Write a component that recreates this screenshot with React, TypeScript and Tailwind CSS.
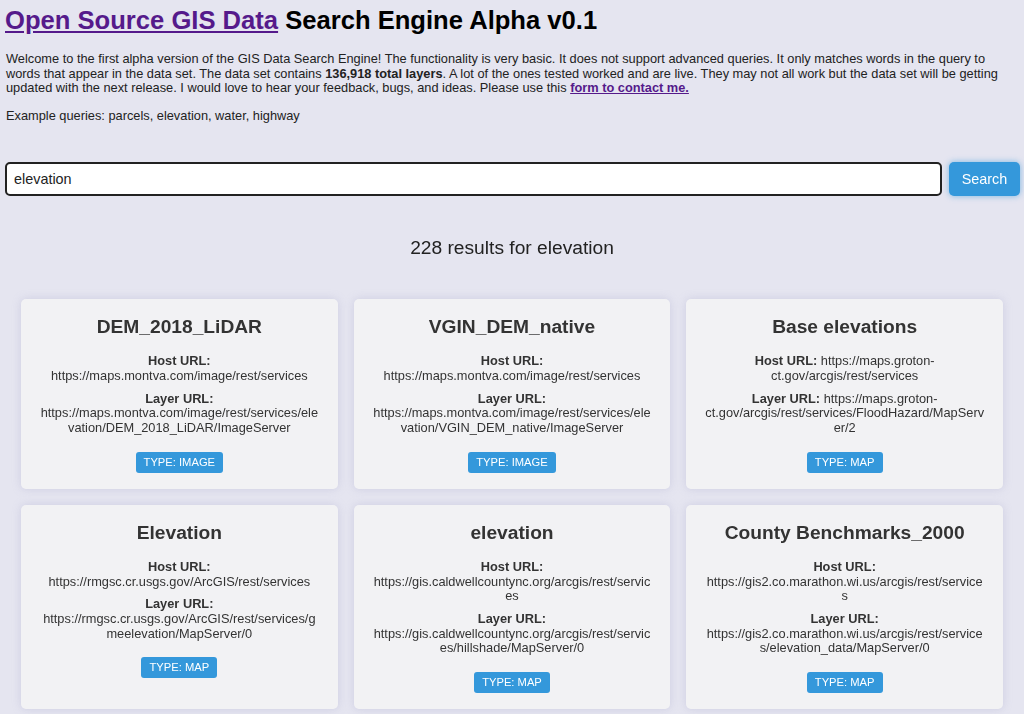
import { useState } from "react";

interface Layer {
    name: string;
    hostUrl: string;
    layerUrl: string;
    type: string;
}

const results: Layer[] = [
    {
        name: "DEM_2018_LiDAR",
        hostUrl: "https://maps.montva.com/image/rest/services",
        layerUrl: "https://maps.montva.com/image/rest/services/elevation/DEM_2018_LiDAR/ImageServer",
        type: "Image",
    },
    {
        name: "VGIN_DEM_native",
        hostUrl: "https://maps.montva.com/image/rest/services",
        layerUrl: "https://maps.montva.com/image/rest/services/elevation/VGIN_DEM_native/ImageServer",
        type: "Image",
    },
    {
        name: "Base elevations",
        hostUrl: "https://maps.groton-ct.gov/arcgis/rest/services",
        layerUrl: "https://maps.groton-ct.gov/arcgis/rest/services/FloodHazard/MapServer/2",
        type: "Map",
    },
    {
        name: "Elevation",
        hostUrl: "https://rmgsc.cr.usgs.gov/ArcGIS/rest/services",
        layerUrl: "https://rmgsc.cr.usgs.gov/ArcGIS/rest/services/gmeelevation/MapServer/0",
        type: "Map",
    },
    {
        name: "elevation",
        hostUrl: "https://gis.caldwellcountync.org/arcgis/rest/services",
        layerUrl: "https://gis.caldwellcountync.org/arcgis/rest/services/hillshade/MapServer/0",
        type: "Map",
    },
    {
        name: "County Benchmarks_2000",
        hostUrl: "https://gis2.co.marathon.wi.us/arcgis/rest/services",
        layerUrl: "https://gis2.co.marathon.wi.us/arcgis/rest/services/elevation_data/MapServer/0",
        type: "Map",
    },
];

function ResultCard({ layer }: { layer: Layer }) {
    return (
        <div className="bg-[#f2f2f4] rounded-[5px] shadow-[0_0_8px_rgba(160,160,200,0.35)] px-[18px] pt-[17px] pb-[16px] text-center text-[#333]">
            <h2 className="text-[19.2px] font-bold leading-[22px]">{layer.name}</h2>
            <p className="mt-[16px] text-[12.8px] leading-[14.7px] break-words">
                <b>Host URL:</b> {layer.hostUrl}
            </p>
            <p className="mt-[8px] text-[12.8px] leading-[14.7px] break-words">
                <b>Layer URL:</b> {layer.layerUrl}
            </p>
            <div className="mt-[13px]">
                <span className="inline-block bg-[#3498db] text-white text-[11.2px] leading-[13px] px-[8px] py-[4px] rounded-[3px] uppercase">
                    Type: {layer.type}
                </span>
            </div>
        </div>
    );
}

export default function App() {
    const [query, setQuery] = useState("elevation");

    return (
        <div className="min-h-screen bg-[#e5e5f0] px-[5px] pb-[16px] font-['Liberation_Sans',Arial,sans-serif] text-[#222]">
            {/* header */}
            <h1 className="pt-[5px] text-[25.6px] leading-[30px] font-bold text-black">
                <a href="#" className="text-[#551a8b] underline">Open Source GIS Data</a> Search Engine Alpha v0.1
            </h1>
            <p className="mt-[17px] text-[12.8px] leading-[14.6px] pl-[1px]">
                Welcome to the first alpha version of the GIS Data Search Engine! The functionality is very basic. It does not support advanced queries. It only matches words in the query to words that appear in the data set. The data set contains <b>136,918 total layers</b>. A lot of the ones tested worked and are live. They may not all work but the data set will be getting updated with the next release. I would love to hear your feedback, bugs, and ideas. Please use this <a href="#" className="font-bold text-[#551a8b] underline">form to contact me.</a>
            </p>
            <p className="mt-[13px] text-[12.8px] leading-[14.6px] pl-[1px]">
                Example queries: parcels, elevation, water, highway
            </p>

            {/* search */}
            <div className="mt-[39px] flex gap-[7px] mr-[-1px]">
                <input
                    autoFocus
                    value={query}
                    onChange={(e) => setQuery(e.target.value)}
                    className="flex-1 h-[34px] bg-white border-2 border-[#222] rounded-[5px] px-[7px] text-[14.4px] text-[#222] outline-none caret-black"
                />
                <button className="w-[71px] h-[34px] bg-[#3498db] text-white text-[14.4px] rounded-[5px] shadow-[0_0_6px_rgba(52,152,219,0.6)]">
                    Search
                </button>
            </div>

            <h3 className="mt-[41px] text-center text-[19.2px] leading-[22px] text-[#222]">
                228 results for {query}
            </h3>

            {/* results */}
            <div className="mt-[40px] px-[16px] grid grid-cols-3 gap-[16px]">
                {results.map((layer, i) => (
                    <ResultCard key={i} layer={layer} />
                ))}
            </div>
        </div>
    );
}
